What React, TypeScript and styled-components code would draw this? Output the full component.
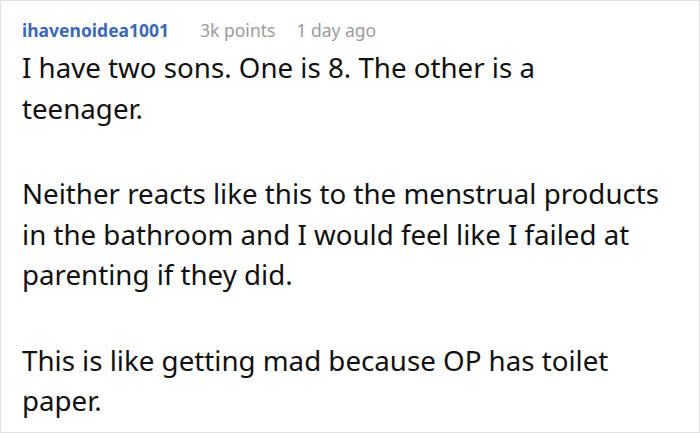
import styled, { createGlobalStyle } from 'styled-components';

const GlobalStyle = createGlobalStyle`
  html, body {
    margin: 0;
    padding: 0;
    background: #fff;
  }
`;

const Card = styled.div`
  box-sizing: border-box;
  width: 700px;
  height: 433px;
  border: 1px solid #e2e2e2;
  padding: 17px 16px 0 21px;
  font-family: 'Noto Sans', sans-serif;
  overflow: hidden;
`;

const Meta = styled.div`
  display: flex;
  align-items: baseline;
  font-size: 17.5px;
  line-height: 24px;
`;

const Author = styled.span`
  color: #3b69b7;
  font-weight: 700;
  margin-right: 31px;
`;

const Muted = styled.span<{ $gap?: number }>`
  color: #9b9b9b;
  margin-right: ${({ $gap }) => $gap ?? 0}px;
`;

const Body = styled.div`
  margin-top: 5px;
  width: 640px;
  font-size: 27.7px;
  line-height: 40.5px;
  color: #111;
`;

const Para = styled.p`
  margin: 0 0 45px 0;
`;

const App = () => (
  <>
    <GlobalStyle />
    <Card>
      <Meta>
        <Author>ihavenoidea1001</Author>
        <Muted $gap={21}>3k points</Muted>
        <Muted>1 day ago</Muted>
      </Meta>
      <Body>
        <Para>I have two sons. One is 8. The other is a teenager.</Para>
        <Para>
          Neither reacts like this to the menstrual products in the bathroom and I would feel like I failed at
          parenting if they did.
        </Para>
        <Para>This is like getting mad because OP has toilet paper.</Para>
      </Body>
    </Card>
  </>
);

export default App;
